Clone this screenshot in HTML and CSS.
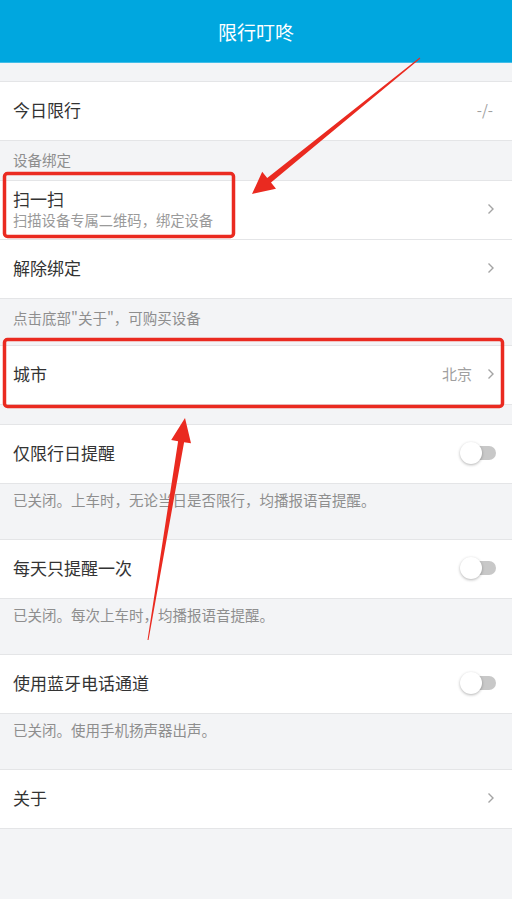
FILE: index.html
```html
<!DOCTYPE html>
<html lang="zh-CN">

<head>
    <meta charset="UTF-8">
    <meta name="viewport" content="width=device-width, initial-scale=1.0">
    <title>限行叮咚</title>

    <link rel="stylesheet" href="styles.css">
</head>

<body>
    <div class="page">
        <header class="top_bar">限行叮咚</header>

        <div class="spacer"></div>
        <div class="group">
            <div class="cell">
                <span class="cell_title">今日限行</span>
                <span class="cell_value">-/-</span>
            </div>
        </div>

        <div class="section_label">设备绑定</div>
        <div class="group">
            <div class="cell">
                <div class="cell_text">
                    <span class="cell_title">扫一扫</span>
                    <span class="cell_sub">扫描设备专属二维码，绑定设备</span>
                </div>
                <svg class="chevron" width="8" height="12" viewBox="0 0 8 12">
                    <polyline points="1.5,1.5 6,6 1.5,10.5" fill="none" stroke="#a4a4a4" stroke-width="1.4"></polyline>
                </svg>
            </div>
            <div class="cell">
                <span class="cell_title">解除绑定</span>
                <svg class="chevron" width="8" height="12" viewBox="0 0 8 12">
                    <polyline points="1.5,1.5 6,6 1.5,10.5" fill="none" stroke="#a4a4a4" stroke-width="1.4"></polyline>
                </svg>
            </div>
        </div>

        <div class="section_label tall">点击底部"关于"，可购买设备</div>
        <div class="group">
            <div class="cell">
                <span class="cell_title">城市</span>
                <span class="cell_value">北京</span>
                <svg class="chevron" width="8" height="12" viewBox="0 0 8 12">
                    <polyline points="1.5,1.5 6,6 1.5,10.5" fill="none" stroke="#a4a4a4" stroke-width="1.4"></polyline>
                </svg>
            </div>
        </div>

        <div class="spacer wide"></div>
        <div class="group">
            <div class="cell">
                <span class="cell_title">仅限行日提醒</span>
                <span class="switch"><span class="knob"></span></span>
            </div>
        </div>
        <div class="note">已关闭。上车时，无论当日是否限行，均播报语音提醒。</div>

        <div class="group">
            <div class="cell">
                <span class="cell_title">每天只提醒一次</span>
                <span class="switch"><span class="knob"></span></span>
            </div>
        </div>
        <div class="note">已关闭。每次上车时，均播报语音提醒。</div>

        <div class="group">
            <div class="cell">
                <span class="cell_title">使用蓝牙电话通道</span>
                <span class="switch"><span class="knob"></span></span>
            </div>
        </div>
        <div class="note">已关闭。使用手机扬声器出声。</div>

        <div class="group">
            <div class="cell">
                <span class="cell_title">关于</span>
                <svg class="chevron" width="8" height="12" viewBox="0 0 8 12">
                    <polyline points="1.5,1.5 6,6 1.5,10.5" fill="none" stroke="#a4a4a4" stroke-width="1.4"></polyline>
                </svg>
            </div>
        </div>

        <!-- red marks drawn over the list -->
        <svg class="marks" width="512" height="899" viewBox="0 0 512 899">
            <rect x="4.5" y="173.5" width="229" height="63" rx="3" fill="none" stroke="#ea2a20" stroke-width="3.5"></rect>
            <rect x="4.5" y="339.5" width="498" height="67" rx="3" fill="none" stroke="#ea2a20" stroke-width="3.5"></rect>
            <polygon fill="#ea2a20"
                points="420.3,58.4 271.0,182.5 276.0,188.7 252,194 262.2,171.7 267.2,177.9 419.7,57.6"></polygon>
            <polygon fill="#ea2a20"
                points="148.5,640.1 184.1,442.2 191.0,443.3 185,418 171.2,440.1 178.1,441.2 147.5,639.9"></polygon>
        </svg>
    </div>
</body>

</html>
```

FILE: styles.css
```css
* {
    margin: 0;
    padding: 0;
    box-sizing: border-box;
}

body {
    width: 512px;
    min-height: 899px;
    background-color: #f3f4f6;
    font-family: "Noto Sans CJK SC", "Noto Sans", sans-serif;
    color: #333;
}

.page {
    position: relative;
    min-height: 899px;
}

.top_bar {
    height: 63px;
    display: flex;
    align-items: center;
    justify-content: center;
    background-color: #00a7df;
    border-bottom: 1px solid #41bde8;
    color: #fff;
    font-size: 19px;
}

.spacer {
    height: 18px;
}

.spacer.wide {
    height: 19px;
}

.group {
    background-color: #fff;
    border-top: 1px solid #e4e5e7;
}

.cell {
    height: 59px;
    display: flex;
    align-items: center;
    padding: 0 17px 3px 13px;
    border-bottom: 1px solid #e4e5e7;
}

.cell_text {
    display: flex;
    flex-direction: column;
    flex: 1;
}

.cell_title {
    flex: 1;
    font-size: 17px;
    line-height: 22px;
    color: #333;
}

.cell_sub {
    font-size: 14.3px;
    line-height: 20px;
    color: #9a9a9a;
}

.cell_value {
    font-size: 15px;
    color: #a0a0a0;
    margin-right: 2px;
}

.cell_value + .chevron {
    margin-left: 13px;
}

.chevron {
    display: block;
}

.section_label {
    height: 39px;
    padding: 9px 13px 0;
    font-size: 14.5px;
    line-height: 20px;
    color: #8e8e8e;
}

.section_label.tall {
    height: 46px;
}

.note {
    height: 55px;
    padding: 6px 13px 0;
    font-size: 14.5px;
    line-height: 20px;
    color: #8e8e8e;
}

.switch {
    position: relative;
    width: 33px;
    height: 14px;
    margin-right: -1px;
    border-radius: 7px;
    background-color: #c8c8c8;
}

.knob {
    position: absolute;
    left: -3px;
    top: -4px;
    width: 22px;
    height: 22px;
    border-radius: 50%;
    background-color: #fff;
    box-shadow: 0 1px 3px rgba(0, 0, 0, .3);
}

.marks {
    position: absolute;
    left: 0;
    top: 0;
    pointer-events: none;
}
```
